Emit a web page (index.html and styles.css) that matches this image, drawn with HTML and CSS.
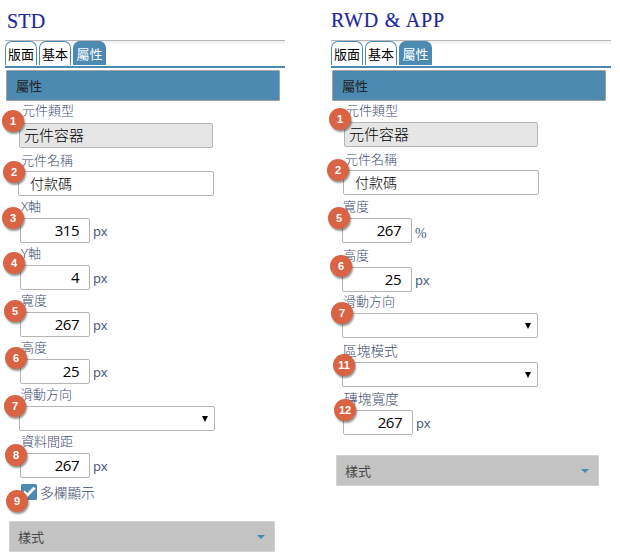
FILE: index.html
```html
<!DOCTYPE html>
<html lang="zh-Hant">
<head>
<meta charset="utf-8">
<title>STD / RWD &amp; APP</title>
<link rel="stylesheet" href="styles.css">
</head>
<body>
<main class="page">
  <section class="panel std">
    <h1 class="title">STD</h1>
    <nav class="tabs"><span class="tab">版面</span><span class="tab">基本</span><span class="tab active">屬性</span></nav>
    <h2 class="heading">屬性</h2>
    <div class="form">
      <div class="field type"><label>元件類型</label><div class="row"><div class="box readonly">元件容器</div></div><b class="badge">1</b></div>
      <div class="field name"><label>元件名稱</label><div class="row"><div class="box text">付款碼</div></div><b class="badge">2</b></div>
      <div class="field"><label>X軸</label><div class="row"><div class="box num">315</div><span class="unit">px</span></div><b class="badge">3</b></div>
      <div class="field"><label>Y軸</label><div class="row"><div class="box num">4</div><span class="unit">px</span></div><b class="badge">4</b></div>
      <div class="field"><label>寬度</label><div class="row"><div class="box num">267</div><span class="unit">px</span></div><b class="badge">5</b></div>
      <div class="field"><label>高度</label><div class="row"><div class="box num">25</div><span class="unit">px</span></div><b class="badge">6</b></div>
      <div class="field slide"><label>滑動方向</label><div class="row"><div class="box select"><i class="caret"></i></div></div><b class="badge">7</b></div>
      <div class="field"><label>資料間距</label><div class="row"><div class="box num">267</div><span class="unit">px</span></div><b class="badge">8</b></div>
      <div class="field check"><svg class="tick" viewBox="0 0 16 16"><rect width="16" height="16" rx="1.5"/><path d="M2.6 7.6 6.2 11.2 13.6 3.8"/></svg><span>多欄顯示</span><b class="badge">9</b></div>
    </div>
    <div class="style-bar"><span>樣式</span><i class="arrow"></i></div>
  </section>

  <section class="panel rwd">
    <h1 class="title">RWD &amp; APP</h1>
    <nav class="tabs"><span class="tab">版面</span><span class="tab">基本</span><span class="tab active">屬性</span></nav>
    <h2 class="heading">屬性</h2>
    <div class="form">
      <div class="field type"><label>元件類型</label><div class="row"><div class="box readonly">元件容器</div></div><b class="badge">1</b></div>
      <div class="field name"><label>元件名稱</label><div class="row"><div class="box text">付款碼</div></div><b class="badge">2</b></div>
      <div class="field"><label>寬度</label><div class="row"><div class="box num">267</div><span class="unit percent">%</span></div><b class="badge">5</b></div>
      <div class="field"><label>高度</label><div class="row"><div class="box num">25</div><span class="unit">px</span></div><b class="badge">6</b></div>
      <div class="field"><label>滑動方向</label><div class="row"><div class="box select"><i class="caret"></i></div></div><b class="badge">7</b></div>
      <div class="field"><label class="large">區塊模式</label><div class="row"><div class="box select"><i class="caret"></i></div></div><b class="badge">11</b></div>
      <div class="field tile"><label class="large">磚塊寬度</label><div class="row"><div class="box num">267</div><span class="unit">px</span></div><b class="badge">12</b></div>
    </div>
    <div class="style-bar"><span>樣式</span><i class="arrow"></i></div>
  </section>
</main>
</body>
</html>
```
FILE: styles.css
```css
* { box-sizing: border-box; }

body {
  margin: 0;
  background: #fff;
  color: #4d5c7c;
  font-family: "Noto Sans", "Noto Sans CJK TC", sans-serif;
  font-size: 13px;
}

.page {
  display: grid;
  grid-template-columns: 283px 283px;
  column-gap: 43px;
  height: 559px;
  padding-left: 2px;
}

.panel { display: flex; flex-direction: column; }

.title {
  height: 40px;
  margin: 0;
  padding: 9px 0 0 5px;
  color: #20259a;
  font: 400 20px/24px "Liberation Serif", serif;
  letter-spacing: .2px;
  -webkit-text-stroke: .15px #20259a;
}

.rwd .title { padding-top: 8px; padding-left: 3px; letter-spacing: .8px; }

.tabs {
  display: flex;
  gap: 2px;
  height: 28px;
  margin-left: 3px;
  border-bottom: 2px solid #4d8ab1;
  background: linear-gradient(#eee, #fff 4px);
  box-shadow: -3px 0 0 #fff;
  border-top: 1px solid #b8b8b8;
}

.tab {
  width: 32px;
  height: 24px;
  border: 1px solid #4d8ab1;
  border-bottom: 0;
  border-radius: 7px 7px 0 0;
  background: #fff;
  color: #000;
  font-size: 13px;
  line-height: 24px;
  text-align: center;
}

.tab.active { width: 33px; background: #4d8ab1; color: #fff; }

.heading {
  width: 274px;
  height: 31px;
  margin: 2px 0 0 4px;
  padding-left: 9px;
  border: 1px solid #a3a3a3;
  border-radius: 1px;
  background: #4d8ab1;
  color: #222;
  font-size: 13px;
  font-weight: 400;
  line-height: 30px;
}

.form { display: grid; }
.std .form { grid-template-rows: 47px 48px repeat(6, 47px) 22px; --inset: 18px; }
.rwd .form { grid-template-rows: 46px 48px 48px 49px 46px 49px 48px; --inset: 14px; }

.field {
  position: relative;
  display: flex;
  flex-direction: column;
  justify-content: flex-end;
  padding-left: var(--inset);
}

.field label {
  height: 16px;
  margin: 0 0 4px 1px;
  color: #3f4e70;
  line-height: 16px;
  font-weight: 300;
  white-space: nowrap;
}

.field .large { font-size: 13.7px; margin-bottom: 3px; }

.row { display: flex; gap: 4px; height: 25px; }

.box {
  width: 196px;
  height: 25px;
  border: 1px solid #b5b5b5;
  border-radius: 2px;
  background: #fff;
  color: #000;
  line-height: 23px;
}

.readonly { width: 194px; padding-left: 4px; background: #e6e6e6; font-size: 15px; font-weight: 300; }
.text { padding-left: 11px; font-size: 14px; font-weight: 300; }
.num { width: 70px; padding-right: 10px; font-family: "Open Sans", sans-serif; font-size: 15px; letter-spacing: -.5px; text-align: right; }
.unit { margin-left: -1px; line-height: 27px; }
.percent { font-family: "Liberation Serif", serif; font-size: 14px; line-height: 31px; }

.select { display: flex; align-items: center; justify-content: flex-end; padding-right: 6px; }
.caret { border: solid transparent; border-width: 6px 3.5px 0; border-top-color: #000; }

.std .type, .std .slide { padding-left: 17px; }
.std .name { padding-left: 16px; }
.std .name label, .std .type label { margin-left: 3px; }
.std .name label, .rwd .name label { margin-bottom: 3px; }
.std .type label { margin-bottom: 5px; }
.rwd .type { padding-left: 16px; }
.rwd .name, .rwd .tile { padding-left: 15px; }
.rwd .type label, .rwd .name label { margin-left: 2px; }

.field.check {
  flex-direction: row;
  justify-content: flex-start;
  padding: 6px 0 0 19px;
  font-size: 13.7px;
  line-height: 17px;
}
.check span { margin-left: 3px; font-weight: 300; color: #3f4e70; }
.tick { width: 16px; height: 16px; fill: #4d8ab1; }
.tick path { fill: none; stroke: #fff; stroke-width: 3; }

.badge {
  position: absolute;
  bottom: 14px;
  left: 1px;
  width: 22px;
  height: 22px;
  border-radius: 50%;
  background: #da6344;
  box-shadow: 1px 2px 2px rgba(0, 0, 0, .42);
  color: #fff;
  font: 700 11px/22px "Liberation Sans", sans-serif;
  text-align: center;
}

.std .field:nth-child(1) .badge { left: 0; bottom: 16px; }
.std .field:nth-child(2) .badge { left: 1px; bottom: 13px; }
.std .field:nth-child(3) .badge { left: 0; }
.std .field:nth-child(4) .badge { left: 1px; bottom: 16px; }
.std .field:nth-child(5) .badge { left: 2px; bottom: 15px; }
.std .field:nth-child(6) .badge { left: 3px; bottom: 15px; }
.std .field:nth-child(7) .badge { left: 2px; }
.std .field:nth-child(8) .badge { left: 3px; bottom: 12px; }
.std .field:nth-child(9) .badge { left: 4px; bottom: -12px; }
.rwd .field:nth-child(1) .badge { left: 1px; bottom: 17px; }
.rwd .field:nth-child(2) .badge { left: -1px; }
.rwd .field:nth-child(3) .badge { left: 0; }
.rwd .field:nth-child(4) .badge { left: 2px; bottom: 15px; }
.rwd .field:nth-child(5) .badge { left: 3px; }
.rwd .field:nth-child(6) .badge { left: 5px; bottom: 11px; }
.rwd .field:nth-child(7) .badge { left: 6px; }

.style-bar {
  display: flex;
  align-items: center;
  justify-content: space-between;
  width: 266px;
  height: 31px;
  margin: 21px 0 0 7px;
  padding: 0 9px 0 8px;
  border: 1px solid #d2d2d2;
  border-radius: 1px;
  background: #c3c3c3;
  color: #484848;
}
.rwd .style-bar { width: 263px; margin: 20px 0 0 8px; }
.arrow { border: solid transparent; border-width: 4px 4px 0; border-top-color: #4d8ab1; }
```
